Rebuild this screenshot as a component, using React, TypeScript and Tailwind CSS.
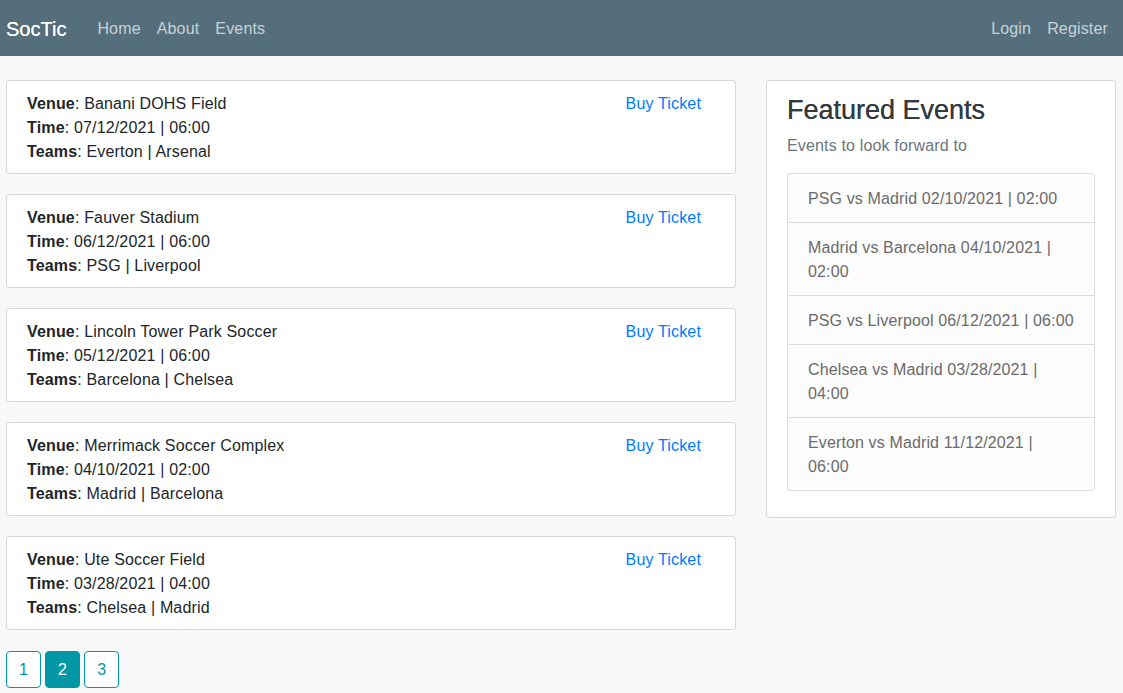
import React from "react";

const events = [
  { venue: "Banani DOHS Field", time: "07/12/2021 | 06:00", teams: "Everton | Arsenal" },
  { venue: "Fauver Stadium", time: "06/12/2021 | 06:00", teams: "PSG | Liverpool" },
  { venue: "Lincoln Tower Park Soccer", time: "05/12/2021 | 06:00", teams: "Barcelona | Chelsea" },
  { venue: "Merrimack Soccer Complex", time: "04/10/2021 | 02:00", teams: "Madrid | Barcelona" },
  { venue: "Ute Soccer Field", time: "03/28/2021 | 04:00", teams: "Chelsea | Madrid" },
];

const featured = [
  "PSG vs Madrid 02/10/2021 | 02:00",
  "Madrid vs Barcelona 04/10/2021 | 02:00",
  "PSG vs Liverpool 06/12/2021 | 06:00",
  "Chelsea vs Madrid 03/28/2021 | 04:00",
  "Everton vs Madrid 11/12/2021 | 06:00",
];

export default function App() {
  return (
    <div className="min-h-[693px] bg-[#f8f8f8] font-['Liberation_Sans',Arial,sans-serif] text-[16px] leading-6 tracking-[0.01em] text-[#212529]">
      {/* Navbar */}
      <nav className="h-14 bg-[#546e7c] flex items-center pl-1.5 pr-[15px] pt-px">
        <span className="text-white text-[20px] font-normal tracking-normal [text-shadow:0_0_0.4px_#fff] mr-[31px]">SocTic</span>
        <div className="flex gap-4 text-[#c8d2d8]">
          <span>Home</span>
          <span>About</span>
          <span>Events</span>
        </div>
        <div className="ml-auto flex gap-4 text-[#c8d2d8]">
          <span>Login</span>
          <span>Register</span>
        </div>
      </nav>

      <div className="flex gap-[30px] pl-1.5 pr-[7px] pt-6">
        {/* Event list */}
        <div className="w-[730px] flex flex-col">
          <div className="flex flex-col gap-5">
            {events.map((e) => (
              <div
                key={e.venue}
                className="bg-white border border-[#d8d8d8] rounded-[3px] pt-[11px] pb-[9px] pl-5 pr-[34px] flex justify-between"
              >
                <div>
                  <div><span className="font-bold">Venue</span>: {e.venue}</div>
                  <div><span className="font-bold">Time</span>: {e.time}</div>
                  <div><span className="font-bold">Teams</span>: {e.teams}</div>
                </div>
                <span className="text-[#007bff]">Buy Ticket</span>
              </div>
            ))}
          </div>

          {/* Pagination */}
          <div className="flex gap-1 mt-[21px]">
            {["1", "2", "3"].map((p) => (
              <span
                key={p}
                className={
                  p === "2"
                    ? "px-3 h-[37px] flex items-center justify-center rounded-[4px] border border-[#0097a7] bg-[#0097a7] text-white"
                    : "px-3 h-[37px] flex items-center justify-center rounded-[4px] border border-[#0097a7] text-[#0097a7] bg-white"
                }
              >
                {p}
              </span>
            ))}
          </div>
        </div>

        {/* Featured */}
        <div className="w-[350px] self-start bg-white border border-[#d8d8d8] rounded-[3px] px-5 pt-3 pb-[26px]">
          <h3 className="text-[27px] leading-[34px] font-medium tracking-normal text-[#343a40] [text-shadow:0_0_0.5px_#343a40]">Featured Events</h3>
          <p className="text-[#6c757d] mt-[7px]">Events to look forward to</p>
          <ul className="mt-[15px] border border-[#dcdcdc] rounded-[3px] bg-[#fcfcfc] tracking-[0.008em]">
            {featured.map((f, i) => (
              <li
                key={f}
                className={
                  i === 0
                    ? "px-5 pt-[13px] pb-[11px] text-[#6b6b6b]"
                    : "px-5 pt-[13px] pb-[11px] text-[#6b6b6b] border-t border-[#dcdcdc]"
                }
              >
                {f}
              </li>
            ))}
          </ul>
        </div>
      </div>
    </div>
  );
}
